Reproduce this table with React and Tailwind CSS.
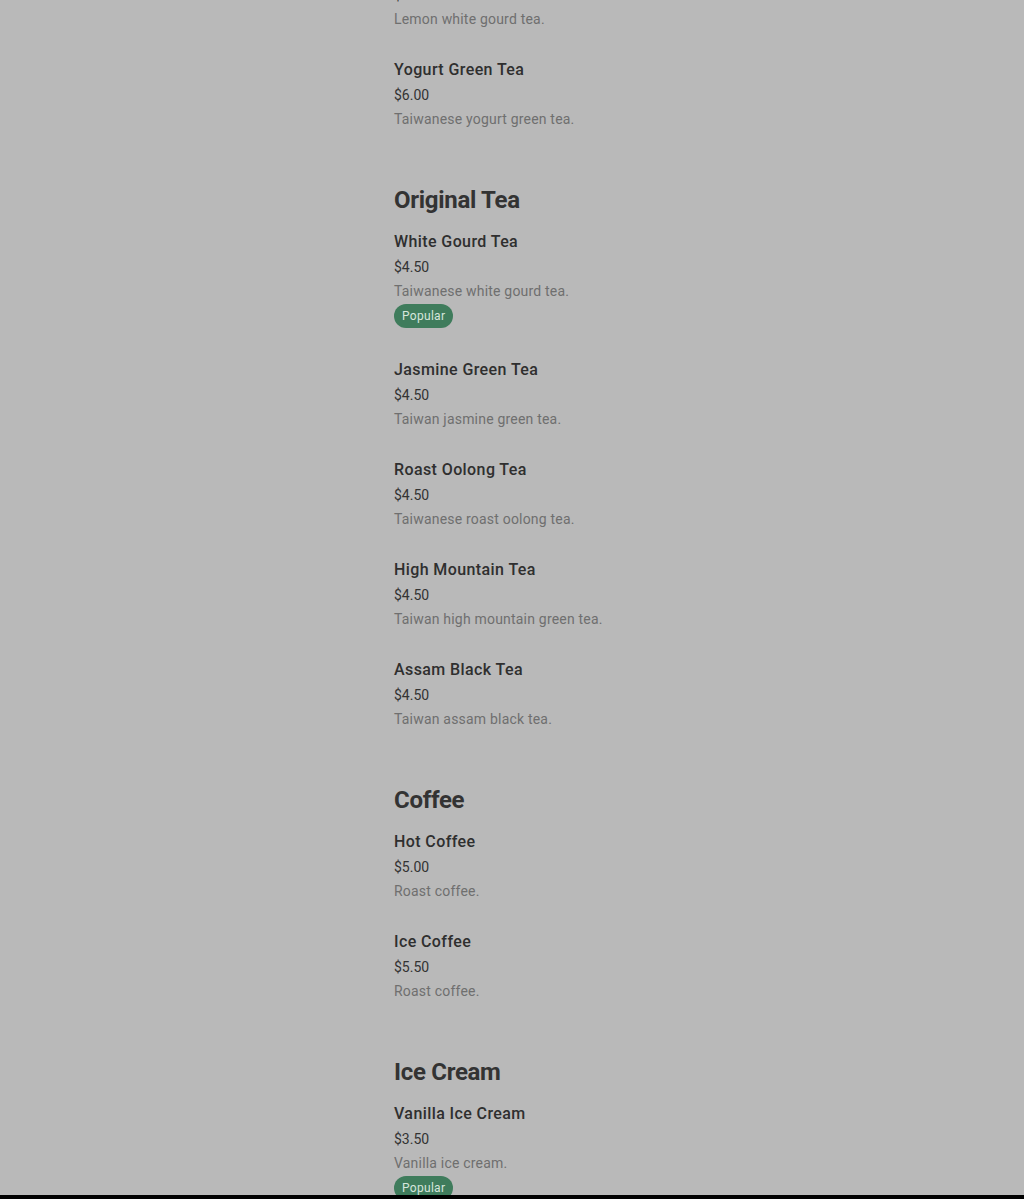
const sections = [
  {
    title: null,
    items: [
      { name: "Lemon White Gourd Tea", price: "$6.00", desc: "Lemon white gourd tea." },
      { name: "Yogurt Green Tea", price: "$6.00", desc: "Taiwanese yogurt green tea." },
    ],
  },
  {
    title: "Original Tea",
    items: [
      { name: "White Gourd Tea", price: "$4.50", desc: "Taiwanese white gourd tea.", popular: true },
      { name: "Jasmine Green Tea", price: "$4.50", desc: "Taiwan jasmine green tea." },
      { name: "Roast Oolong Tea", price: "$4.50", desc: "Taiwanese roast oolong tea." },
      { name: "High Mountain Tea", price: "$4.50", desc: "Taiwan high mountain green tea." },
      { name: "Assam Black Tea", price: "$4.50", desc: "Taiwan assam black tea." },
    ],
  },
  {
    title: "Coffee",
    items: [
      { name: "Hot Coffee", price: "$5.00", desc: "Roast coffee." },
      { name: "Ice Coffee", price: "$5.50", desc: "Roast coffee." },
    ],
  },
  {
    title: "Ice Cream",
    items: [
      { name: "Vanilla Ice Cream", price: "$3.50", desc: "Vanilla ice cream.", popular: true },
    ],
  },
];

function MenuItem({ item }) {
  return (
    <div className={item.popular ? "flex flex-col pb-[3px]" : "flex flex-col"}>
      <h3 className="text-base leading-6 font-medium tracking-[0.4px] text-[#2f2f2f]">{item.name}</h3>
      <p className="mt-px text-sm leading-6 text-[#333]">{item.price}</p>
      <p className="text-sm leading-6 tracking-[0.2px] text-[#6f6f6f]">{item.desc}</p>
      {item.popular && (
        <span className="mt-px self-start h-6 px-2 rounded-full bg-[#3f7c5c] text-[#d6e6dc] text-xs leading-6 tracking-[0.3px]">
          Popular
        </span>
      )}
    </div>
  );
}

export default function App() {
  return (
    <div
      className="relative h-[1199px] overflow-hidden bg-[#b9b9b9]"
      style={{ fontFamily: "Roboto, 'Open Sans', sans-serif" }}
    >
      <div className="ml-[394px] -mt-[42px] flex flex-col gap-[53px]">
        {sections.map((s, i) => (
          <section key={i} className="flex flex-col">
            {s.title && (
              <h2 className="mb-[14px] text-2xl leading-8 font-bold tracking-[-0.3px] text-[#333]">
                {s.title}
              </h2>
            )}
            <div className="flex flex-col gap-[27px]">
              {s.items.map((item) => (
                <MenuItem key={item.name} item={item} />
              ))}
            </div>
          </section>
        ))}
      </div>
      <div className="absolute bottom-0 left-0 right-0 h-1 bg-black" />
    </div>
  );
}
